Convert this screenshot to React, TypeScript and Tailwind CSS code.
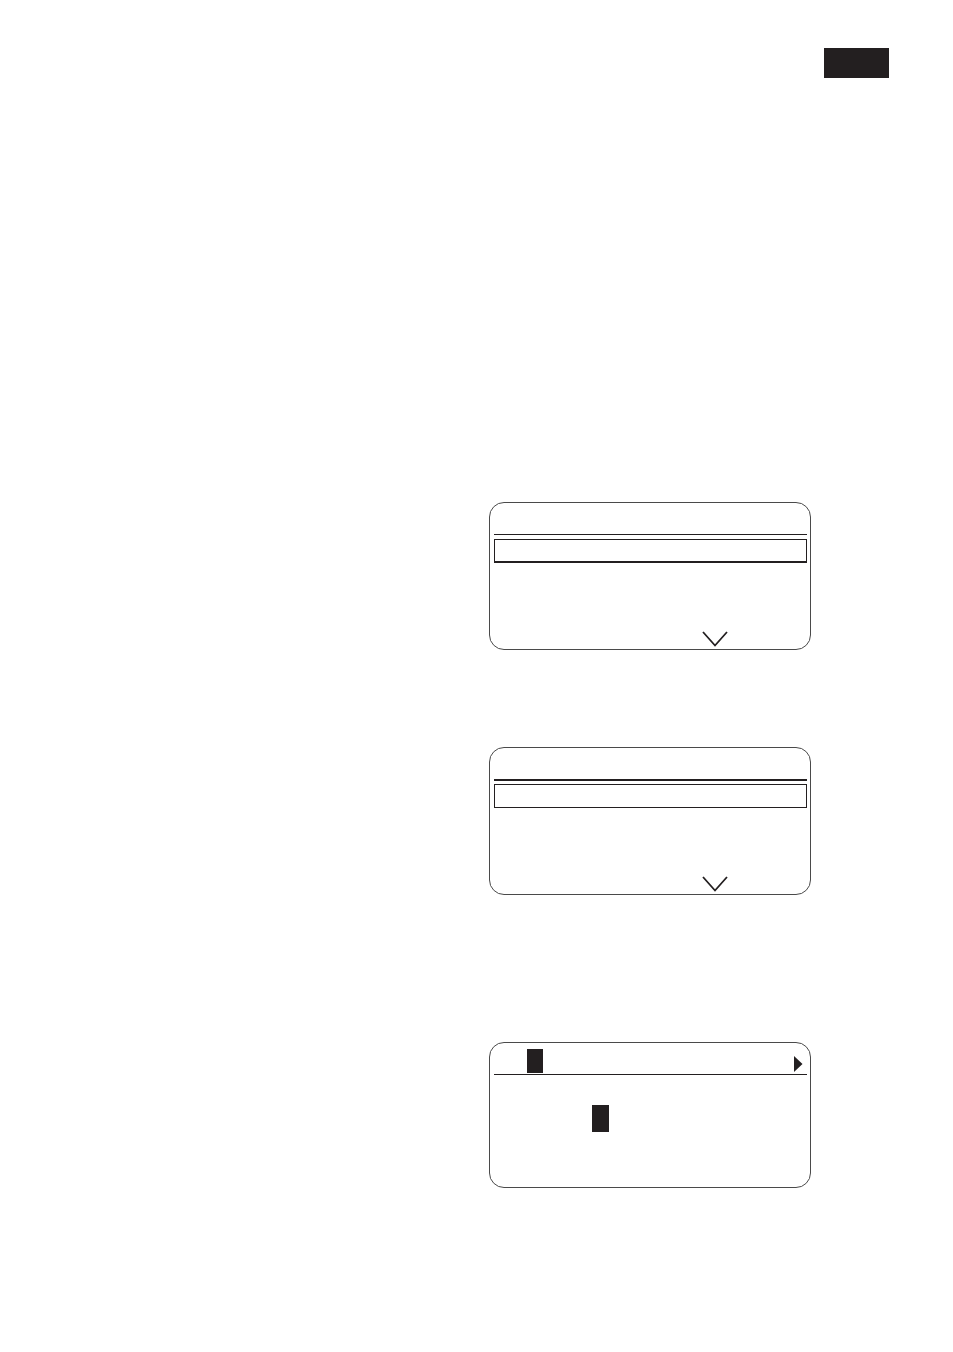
import React from 'react'

// 下拉箭头
function Chevron() {
  return (
    <svg width="26" height="16" viewBox="0 0 26 16" className="block">
      <polyline
        points="1,1 13,14.5 25,1"
        fill="none"
        stroke="#231f20"
        strokeWidth="1.8"
      />
    </svg>
  )
}

// 菜单显示屏（带选中行）
function MenuScreen({ thickRule }: { thickRule?: boolean }) {
  return (
    <div className="w-[322px] h-[148px] rounded-[15px] border-[1.5px] border-[#4a4a4a] px-[3.5px] pt-[30.5px] flex flex-col">
      <div
        className={
          thickRule
            ? 'h-[2.5px] bg-[#231f20]'
            : 'h-[1.5px] bg-[#231f20]'
        }
      />
      <div
        className={
          thickRule
            ? 'mt-[3px] h-[24px] border-[1.5px] border-[#231f20]'
            : 'mt-[4px] h-[24px] border-[1.5px] border-b-[2.5px] border-[#231f20]'
        }
      />
      <div className="mt-auto mb-[2px] ml-[208px]">
        <Chevron />
      </div>
    </div>
  )
}

// 输入显示屏（带光标块）
function InputScreen() {
  return (
    <div className="w-[322px] h-[146px] rounded-[15px] border-[1.5px] border-[#4a4a4a] px-[3.5px] flex flex-col">
      <div className="h-[30.5px] flex items-start">
        <div className="mt-[5.5px] ml-[33px] w-[16px] h-[24px] bg-[#231f20]" />
        <svg width="9" height="16" viewBox="0 0 9 16" className="ml-auto mt-[12.5px] mr-[4px]">
          <polygon points="0,0 8.5,8 0,16" fill="#231f20" />
        </svg>
      </div>
      <div className="h-[1.2px] bg-[#231f20]" />
      <div className="mt-[30px] ml-[98px] w-[17px] h-[27px] bg-[#231f20]" />
    </div>
  )
}

export default function App() {
  return (
    <div className="w-[953px] min-h-[1352px] bg-white">
      <div className="flex justify-end pt-[48px] pr-[64px]">
        <div className="w-[65px] h-[30px] bg-[#231f20]" />
      </div>

      <div className="ml-[489px] mt-[424px] flex flex-col">
        <MenuScreen />
        <div className="mt-[97px]">
          <MenuScreen thickRule />
        </div>
        <div className="mt-[147px]">
          <InputScreen />
        </div>
      </div>
    </div>
  )
}
